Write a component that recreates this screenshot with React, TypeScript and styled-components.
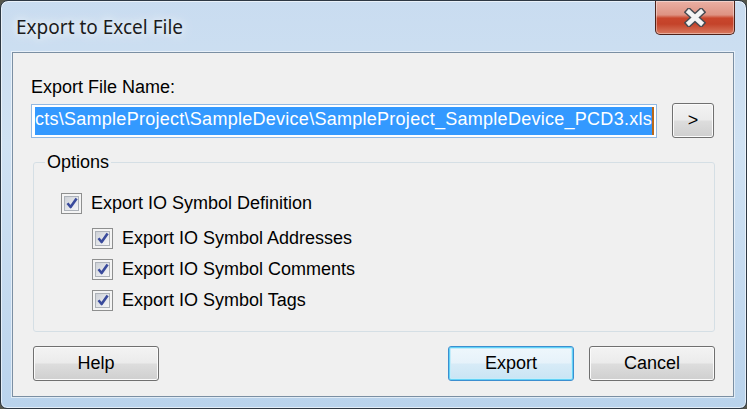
import React from 'react';
import styled, { createGlobalStyle, css } from 'styled-components';

const GlobalStyle = createGlobalStyle`
  html, body {
    margin: 0;
    padding: 0;
  }
  body {
    background: #55564c;
    font-family: "Liberation Sans", Arial, sans-serif;
  }
  * {
    box-sizing: border-box;
  }
`;

const Window = styled.div`
  width: 747px;
  height: 409px;
  border: 1px solid #2d3843;
  border-radius: 8px 8px 7px 7px;
  padding: 0 12px 11px 11px;
  display: flex;
  flex-direction: column;
  overflow: hidden;
  background: linear-gradient(180deg, #c9dcf0 0%, #d0e2f3 35%, #c3d9ef 75%, #b9d3ec 100%);
  box-shadow: inset 0 0 0 1px rgba(255, 255, 255, 0.6);
`;

const TitleBar = styled.div`
  height: 51px;
  flex-shrink: 0;
  display: flex;
  align-items: flex-start;
  justify-content: space-between;
`;

const Title = styled.div`
  margin: 13px 0 0 4px;
  font-family: "Noto Sans", "Open Sans", sans-serif;
  font-size: 19px;
  line-height: 26px;
  color: #1c1c1c;
  text-shadow: 0 0 8px #fff, 0 0 16px rgba(255, 255, 255, 0.9);
`;

const CloseButton = styled.div`
  width: 80px;
  height: 34px;
  margin-right: -1px;
  border: 1px solid #4f2219;
  border-top: none;
  border-radius: 0 0 5px 5px;
  display: flex;
  align-items: center;
  justify-content: center;
  background: linear-gradient(
    180deg,
    #eab0a4 0%,
    #de9383 42%,
    #c9462c 52%,
    #c4432a 70%,
    #d97a60 100%
  );
  box-shadow: inset 0 0 0 1px rgba(255, 255, 255, 0.4);
`;

const Client = styled.div`
  flex: 1;
  display: flex;
  flex-direction: column;
  padding: 24px 18px 0 20px;
  background: #f0f0f0;
  border: 1px solid #7b8fa3;
  box-shadow: 0 0 0 1px rgba(255, 255, 255, 0.55);
`;

const FieldLabel = styled.div`
  margin-left: -2px;
  font-size: 18px;
  line-height: 21px;
  color: #000;
`;

const InputRow = styled.div`
  display: flex;
  align-items: center;
  gap: 15px;
  margin: 5px 1px 0 -2px;
`;

const FileInput = styled.div`
  flex: 1;
  height: 34px;
  display: flex;
  align-items: stretch;
  padding: 2px 2px 2px 3px;
  background: #fff;
  border: 1px solid #92b9e3;
  overflow: hidden;
`;

const Selection = styled.div`
  flex: 1;
  overflow: hidden;
  display: flex;
  justify-content: flex-end;
  align-items: center;
  padding-bottom: 3px;
  background: #3399ff;
  color: #fff;
  font-size: 18px;
  letter-spacing: 0.27px;
  white-space: nowrap;
`;

const Caret = styled.div`
  width: 2px;
  background: #b8681c;
`;

const Button = styled.button<{ $primary?: boolean; $width?: number }>`
  width: ${p => p.$width ?? 126}px;
  height: 35px;
  padding: 0;
  border: 1px solid #707070;
  border-radius: 3px;
  background: linear-gradient(180deg, #f3f3f3 0%, #ebebeb 48%, #dddddd 52%, #cfcfcf 100%);
  box-shadow: inset 0 0 0 1px #fbfbfb;
  font-family: "Liberation Sans", Arial, sans-serif;
  font-size: 18px;
  color: #000;
  flex-shrink: 0;

  ${p =>
    p.$primary &&
    css`
      border-color: #3c8fd0;
      background: linear-gradient(180deg, #eef7fc 0%, #e6f2fa 48%, #d7ebf7 52%, #c9e4f4 100%);
      box-shadow: inset 0 0 0 1px #62d2f6, inset 0 0 0 2px #c4ecfa;
    `}
`;

const GroupBox = styled.fieldset`
  margin: 14px 0 0 0;
  padding: 0;
  height: 180px;
  border: 1px solid #d5dfe5;
  border-radius: 3px;
`;

const Legend = styled.legend`
  margin-left: 11px;
  padding: 0 2px;
  font-size: 18px;
  line-height: 21px;
  color: #000;
`;

const OptionList = styled.div<{ $indent: number; $top: number }>`
  display: flex;
  flex-direction: column;
  gap: 9px;
  margin: ${p => p.$top}px 0 0 ${p => p.$indent}px;
`;

const CheckRow = styled.label`
  display: flex;
  align-items: center;
  gap: 9px;
  height: 22px;
  font-size: 18px;
  line-height: 21px;
  color: #000;
`;

const Box = styled.span`
  width: 21px;
  height: 21px;
  flex-shrink: 0;
  display: flex;
  padding: 2px;
  border: 1px solid #8e8f8f;
  background: #f4f4f4;
`;

const BoxInner = styled.span`
  flex: 1;
  display: flex;
  align-items: center;
  justify-content: center;
  border: 1px solid #adb2b9;
  background: linear-gradient(135deg, #cdd1d7 0%, #e4e6ea 55%, #f6f6f6 100%);
`;

const Footer = styled.div`
  display: flex;
  margin-top: 14px;
`;

const Actions = styled.div`
  display: flex;
  gap: 15px;
  margin-left: auto;
`;

const CloseGlyph = () => (
  <svg width="22" height="19" viewBox="0 0 22 19">
    <g stroke="#474b52" strokeWidth="7.5" strokeLinecap="square">
      <line x1="5" y1="4" x2="17" y2="15" />
      <line x1="17" y1="4" x2="5" y2="15" />
    </g>
    <g stroke="#f4f4f4" strokeWidth="4.5" strokeLinecap="square">
      <line x1="5" y1="4" x2="17" y2="15" />
      <line x1="17" y1="4" x2="5" y2="15" />
    </g>
  </svg>
);

const CheckMark = () => (
  <svg width="12" height="12" viewBox="0 0 12 12">
    <path d="M1.5 6.2 L4.6 10 L10.6 1.4" fill="none" stroke="#3a4b9c" strokeWidth="2.6" strokeLinejoin="round" />
  </svg>
);

const Checkbox = ({ label }: { label: string }) => (
  <CheckRow>
    <Box>
      <BoxInner>
        <CheckMark />
      </BoxInner>
    </Box>
    {label}
  </CheckRow>
);

const subOptions = [
  'Export IO Symbol Addresses',
  'Export IO Symbol Comments',
  'Export IO Symbol Tags',
];

export default function App() {
  return (
    <>
      <GlobalStyle />
      <Window>
        <TitleBar>
          <Title>Export to Excel File</Title>
          <CloseButton>
            <CloseGlyph />
          </CloseButton>
        </TitleBar>
        <Client>
          <FieldLabel>Export File Name:</FieldLabel>
          <InputRow>
            <FileInput>
              <Selection>cts\SampleProject\SampleDevice\SampleProject_SampleDevice_PCD3.xls</Selection>
              <Caret />
            </FileInput>
            <Button $width={42}>&gt;</Button>
          </InputRow>
          <GroupBox>
            <Legend>Options</Legend>
            <OptionList $indent={27} $top={19}>
              <Checkbox label="Export IO Symbol Definition" />
              <OptionList $indent={31} $top={4}>
                {subOptions.map(o => (
                  <Checkbox key={o} label={o} />
                ))}
              </OptionList>
            </OptionList>
          </GroupBox>
          <Footer>
            <Button>Help</Button>
            <Actions>
              <Button $primary>Export</Button>
              <Button>Cancel</Button>
            </Actions>
          </Footer>
        </Client>
      </Window>
    </>
  );
}
